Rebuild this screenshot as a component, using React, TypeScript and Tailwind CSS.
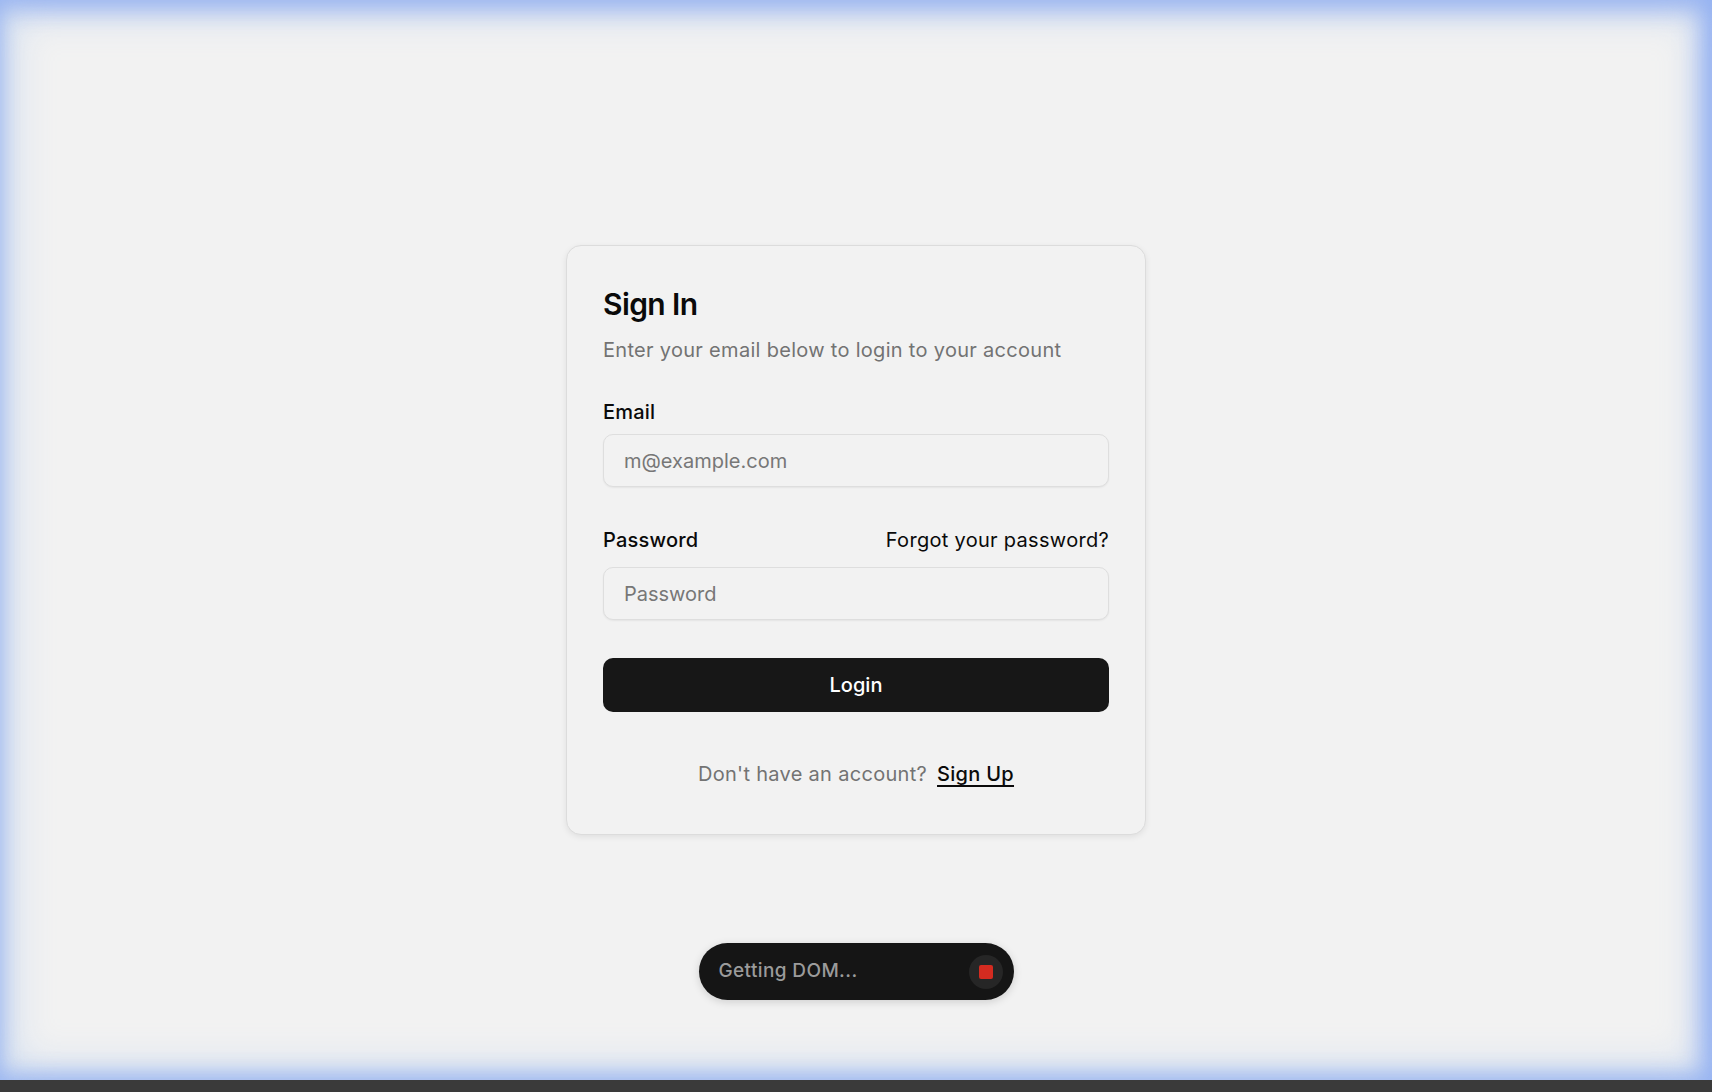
import { useState } from "react";

const font = { fontFamily: "Inter, 'Noto Sans', sans-serif" };

const Field = ({
  label,
  placeholder,
  type = "text",
  extra,
  labelGap,
}: any) => (
  <div>
    <div className="flex items-center justify-between h-7">
      <label className="text-[20px] leading-7 font-medium tracking-[0.01em] text-[#0a0a0a]">
        {label}
      </label>
      {extra}
    </div>
    <input
      type={type}
      placeholder={placeholder}
      className={`${labelGap} block w-full h-[53px] rounded-[10px] border border-[#dedede] bg-[#f2f2f2] px-5 text-[20px] text-[#0a0a0a] placeholder:text-[#777777] shadow-[0_1px_2px_rgba(0,0,0,0.06)] outline-none`}
    />
  </div>
);

const RecordingPill = () => (
  <div className="mt-[108px] w-[315px] h-[57px] rounded-full bg-[#151515] shadow-[0_2px_8px_rgba(0,0,0,0.15)] flex items-center justify-between pl-[20px] pr-[11px]">
    <span className="text-[19px] font-medium tracking-[0.02em] text-[#9b9b9b]">
      Getting DOM...
    </span>
    <span className="w-[34px] h-[34px] rounded-full bg-[#262626] flex items-center justify-center">
      <span className="w-[14px] h-[14px] rounded-[2px] bg-[#d42b20]" />
    </span>
  </div>
);

export default function App() {
  const [email, setEmail] = useState("");
  return (
    <div className="w-full h-[1092px] flex flex-col bg-[#f2f2f2]" style={font}>
      <div className="relative h-[1080px] w-full flex flex-col items-center pt-[245px] shadow-[inset_0_0_40px_12px_rgba(165,195,240,0.45),inset_-12px_0_24px_rgba(110,145,245,0.55),inset_0_12px_22px_rgba(120,150,240,0.45),inset_0_-8px_18px_rgba(130,160,240,0.35)]">
        <div className="w-[580px] rounded-[15px] border border-[#dcdcdc] bg-[#f2f2f2] shadow-[0_2px_6px_rgba(0,0,0,0.08)] px-9 pt-10 pb-[46px]">
          <h1 className="text-[30px] leading-9 font-semibold tracking-[-0.02em] text-[#0a0a0a]">
            Sign In
          </h1>
          <p className="mt-[14px] text-[20px] leading-7 text-[#737373] tracking-[0.015em]">
            Enter your email below to login to your account
          </p>

          <div className="mt-[34px]">
            <Field
              label="Email"
              placeholder="m@example.com"
              labelGap="mt-2"
            />
          </div>

          <div className="mt-[39px]">
            <Field
              label="Password"
              placeholder="Password"
              type="password"
              labelGap="mt-[13px]"
              extra={
                <a className="text-[20px] leading-7 tracking-[0.015em] text-[#0a0a0a] cursor-pointer">
                  Forgot your password?
                </a>
              }
            />
          </div>

          <button
            onClick={() => setEmail(email)}
            className="mt-[38px] w-full h-[54px] rounded-[10px] bg-[#171717] text-white text-[20px] font-medium"
          >
            Login
          </button>

          <div className="mt-[48px] text-center text-[20px] leading-7 tracking-[0.015em]">
            <span className="text-[#737373]">Don't have an account?</span>
            <a className="ml-[10px] font-medium text-[#0a0a0a] underline underline-offset-4 cursor-pointer">
              Sign Up
            </a>
          </div>
        </div>

        <RecordingPill />
      </div>
      <div className="h-3 w-full bg-[#3a3a3a]" />
    </div>
  );
}
